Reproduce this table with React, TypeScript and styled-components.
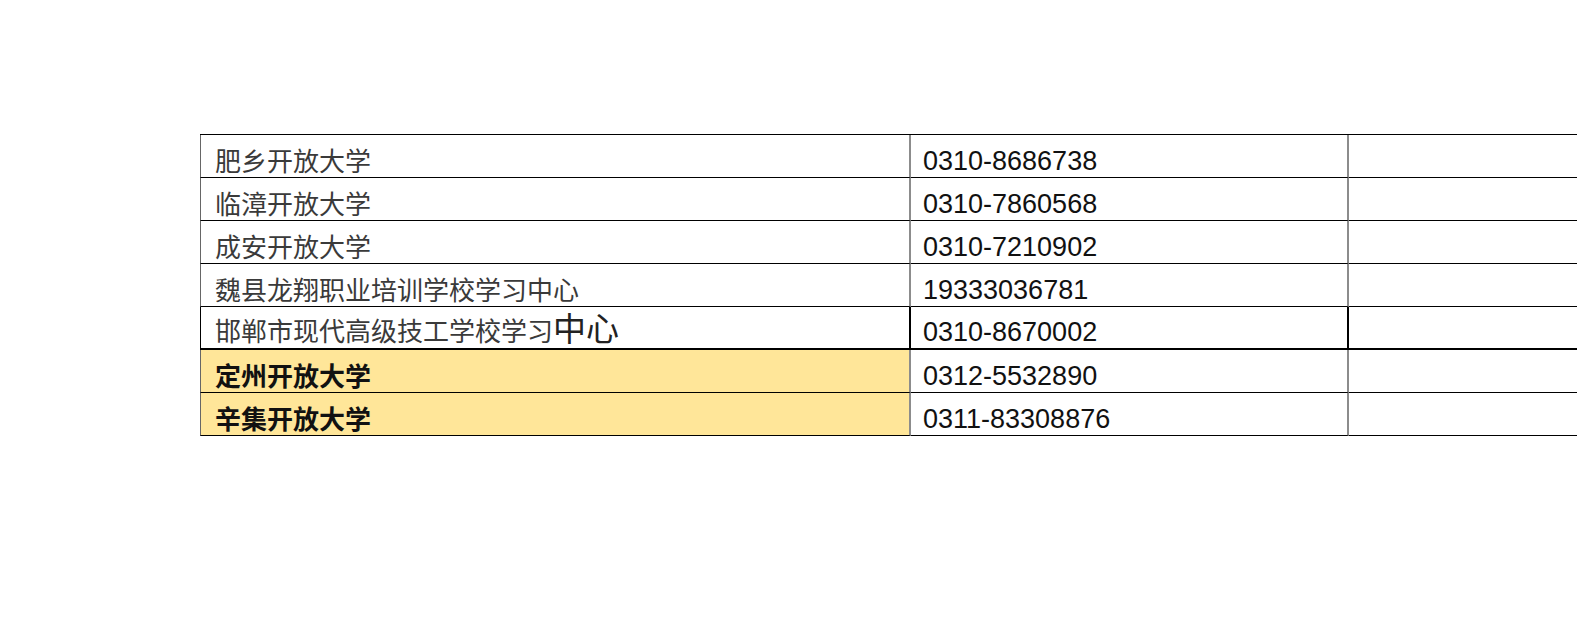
import React from "react";
import styled, { createGlobalStyle } from "styled-components";

const GlobalStyle = createGlobalStyle`
  html, body {
    margin: 0;
    padding: 0;
    background: #ffffff;
    overflow: hidden;
  }
`;

interface Contact {
  name: string;
  phone: string;
  accent?: string;
  highlight?: "gold" | "framed";
}

const contacts: Contact[] = [
  { name: "肥乡开放大学", phone: "0310-8686738" },
  { name: "临漳开放大学", phone: "0310-7860568" },
  { name: "成安开放大学", phone: "0310-7210902" },
  { name: "魏县龙翔职业培训学校学习中心", phone: "19333036781" },
  { name: "邯郸市现代高级技工学校学习", accent: "中心", phone: "0310-8670002", highlight: "framed" },
  { name: "定州开放大学", phone: "0312-5532890", highlight: "gold" },
  { name: "辛集开放大学", phone: "0311-83308876", highlight: "gold" },
];

const Page = styled.div`
  width: 100vw;
  height: 100vh;
  overflow: hidden;
  padding: 134px 0 0 200px;
  box-sizing: border-box;
`;

const Sheet = styled.table`
  border-collapse: separate;
  border-spacing: 0;
  border-top: 1px solid #000;
  table-layout: fixed;
  width: 1800px;
`;

const Row = styled.tr``;

const Cell = styled.td<{ $framed?: boolean }>`
  height: 43px;
  padding: 0;
  vertical-align: bottom;
  box-sizing: border-box;
  border-bottom: ${(p) => (p.$framed ? "2px" : "1px")} solid #000;
  border-right: 2px solid ${(p) => (p.$framed ? "#000" : "#8c8c8c")};
`;

const NameCell = styled(Cell)<{ $gold?: boolean }>`
  width: 711px;
  border-left: 1px solid ${(p) => (p.$framed ? "#000" : "#666")};
  background: ${(p) => (p.$gold ? "#ffe699" : "#fff")};
  padding: 0 0 4px 14px;
  font-family: "Noto Sans CJK SC", sans-serif;
  font-size: 26px;
  line-height: 1;
  font-weight: ${(p) => (p.$gold ? 700 : 400)};
  color: ${(p) => (p.$gold ? "#111" : "#3a3a3a")};
  white-space: nowrap;
`;

const Accent = styled.span`
  font-size: 33px;
  line-height: 1;
  color: #222;
`;

const PhoneCell = styled(Cell)`
  width: 438px;
  padding: 0 0 0 12px;
  font-family: "Liberation Sans", Arial, sans-serif;
  font-size: 27px;
  line-height: 31px;
  color: #111;
`;

const BlankCell = styled(Cell)`
  border-right: none;
`;

export default function App() {
  return (
    <>
      <GlobalStyle />
      <Page>
        <Sheet>
          <tbody>
            {contacts.map((c) => {
              const framed = c.highlight === "framed";
              const gold = c.highlight === "gold";
              return (
                <Row key={c.name}>
                  <NameCell $framed={framed} $gold={gold}>
                    {c.name}
                    {c.accent && <Accent>{c.accent}</Accent>}
                  </NameCell>
                  <PhoneCell $framed={framed}>{c.phone}</PhoneCell>
                  <BlankCell $framed={framed} />
                </Row>
              );
            })}
          </tbody>
        </Sheet>
      </Page>
    </>
  );
}
